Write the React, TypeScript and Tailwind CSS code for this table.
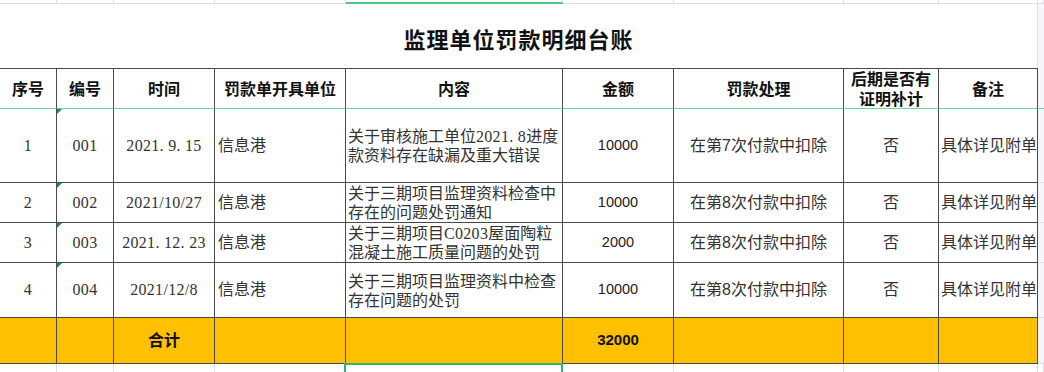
import type { ReactNode } from 'react';

const grid = 'grid grid-cols-[57px_57px_101px_131px_217px_111px_170px_95px_99px_1fr]';
const line = 'border-[#4a4a4a]';
const light = 'border-[#dcdfe4]';

// SimSun-style half-width digits
function N({ children }: { children: ReactNode }) {
  return <span className="font-['Liberation_Serif',serif] text-[16px] tracking-[0.3px]">{children}</span>;
}

function Tri() {
  return (
    <span className="absolute left-0 top-0 h-0 w-0 border-r-[5px] border-t-[5px] border-r-transparent border-t-[#1a8f3c]" />
  );
}

type Row = {
  no: string;
  code: string;
  date: string;
  content: [ReactNode, ReactNode];
  amount: string;
  times: string;
  h: string;
};

const rows: Row[] = [
  {
    no: '1',
    code: '001',
    date: '2021. 9. 15',
    content: [<>关于审核施工单位<N>2021. 8</N>进度</>, '款资料存在缺漏及重大错误'],
    amount: '10000',
    times: '7',
    h: 'h-[74px]',
  },
  {
    no: '2',
    code: '002',
    date: '2021/10/27',
    content: ['关于三期项目监理资料检查中', '存在的问题处罚通知'],
    amount: '10000',
    times: '8',
    h: 'h-[40px]',
  },
  {
    no: '3',
    code: '003',
    date: '2021. 12. 23',
    content: [<>关于三期项目<N>C0203</N>屋面陶粒</>, '混凝土施工质量问题的处罚'],
    amount: '2000',
    times: '8',
    h: 'h-[40px]',
  },
  {
    no: '4',
    code: '004',
    date: '2021/12/8',
    content: ['关于三期项目监理资料中检查', '存在问题的处罚'],
    amount: '10000',
    times: '8',
    h: 'h-[55px]',
  },
];

const headers = ['序号', '编号', '时间', '罚款单开具单位', '内容', '金额', '罚款处理'];

export default function App() {
  const cell = `flex items-center border-r border-b ${line} overflow-hidden whitespace-nowrap`;

  return (
    <div className="relative h-[372px] w-[1044px] overflow-hidden bg-white font-['Liberation_Sans','Noto_Sans_CJK_SC',sans-serif] text-[16px] text-[#333]">
      {/* grid strip above */}
      <div className={`${grid} h-[4px]`}>
        {Array.from({ length: 10 }).map((_, i) =>
          i === 4 ? (
            <div key={i} className={`border-r ${light} border-b-2 border-b-[#4cc58a]`} />
          ) : (
            <div key={i} className={`border-r border-b ${light}`} />
          )
        )}
      </div>

      {/* title */}
      <div className="grid h-[64px] grid-cols-[1038px_1fr]">
        <div className={`flex items-center justify-center border-r ${light}`}>
          <h1 className="pt-[8px] text-[22px] font-bold tracking-[1px] text-[#111]">监理单位罚款明细台账</h1>
        </div>
        <div className="bg-[#f4f6f9]" />
      </div>

      {/* header */}
      <div className={`${grid} h-[41px] font-bold text-[#111]`}>
        {headers.map((t) => (
          <div key={t} className={`${cell} justify-center border-t border-b-[#6ad6a3] pt-[2px]`}>
            {t}
          </div>
        ))}
        <div className={`${cell} flex-col justify-center border-t border-b-[#6ad6a3] pt-[3px] leading-[20px]`}>
          <span>后期是否有</span>
          <span>证明补计</span>
        </div>
        <div className={`${cell} justify-center border-t border-b-[#6ad6a3] pt-[2px]`}>备注</div>
        <div className="border-b border-[#6ad6a3] bg-[#f4f6f9]" />
      </div>

      {/* body */}
      {rows.map((r) => (
        <div key={r.no} className={`${grid} ${r.h}`}>
          <div className={`${cell} justify-center`}>
            <N>{r.no}</N>
          </div>
          <div className={`${cell} relative justify-center`}>
            <Tri />
            <N>{r.code}</N>
          </div>
          <div className={`${cell} justify-center`}>
            <N>{r.date}</N>
          </div>
          <div className={`${cell} pl-[3px]`}>信息港</div>
          <div className={`${cell} flex-col items-start justify-center pl-[2px] pt-[1px] leading-[19px]`}>
            <span>{r.content[0]}</span>
            <span>{r.content[1]}</span>
          </div>
          <div className={`${cell} justify-center text-[14.5px] text-[#222]`}>{r.amount}</div>
          <div className={`${cell} justify-center`}>在第{r.times}次付款中扣除</div>
          <div className={`${cell} justify-center`}>否</div>
          <div className={`${cell} pl-[2px]`}>具体详见附单</div>
          <div className={`border-b ${light} bg-[#f4f6f9]`} />
        </div>
      ))}

      {/* total */}
      <div className={`${grid} h-[46px]`}>
        {Array.from({ length: 9 }).map((_, i) => (
          <div key={i} className={`${cell} justify-center bg-[#ffc000] font-bold text-[#111]`}>
            {i === 2 && '合计'}
            {i === 5 && <span className="text-[15px]">32000</span>}
          </div>
        ))}
        <div className={`border-b ${light} bg-[#f4f6f9]`} />
      </div>

      {/* grid strip below */}
      <div className={`${grid} h-[8px]`}>
        {Array.from({ length: 10 }).map((_, i) => (
          <div key={i} className={`relative border-r ${light}`}>
            {i === 4 && (
              <div className="absolute -left-[2px] -right-px -top-px bottom-0 border-2 border-b-0 border-[#2fb574]" />
            )}
          </div>
        ))}
      </div>
    </div>
  );
}
